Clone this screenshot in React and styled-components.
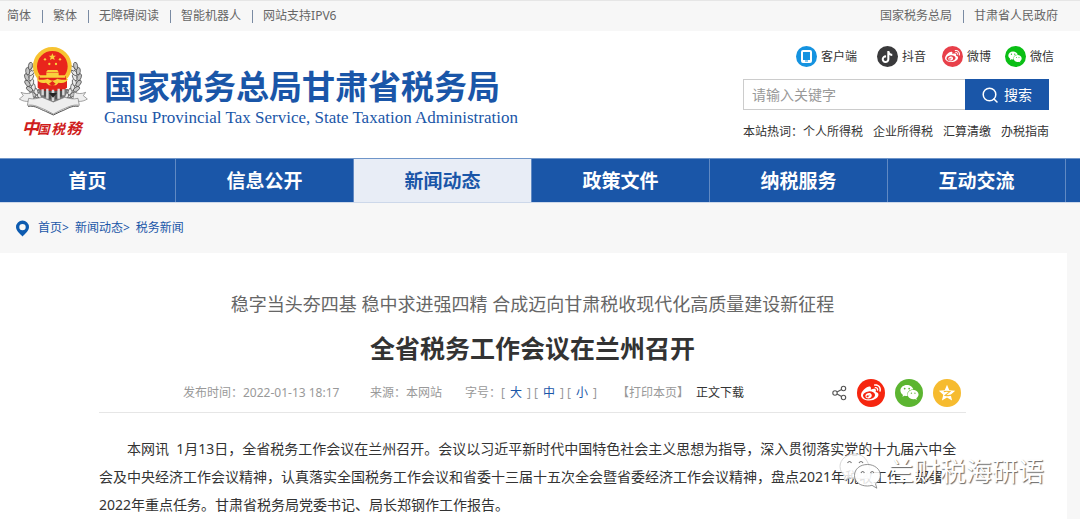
import styled, { createGlobalStyle, css } from 'styled-components'
import { FaTiktok, FaWeibo, FaWeixin } from 'react-icons/fa'

const BLUE = '#1a56a8'
const LIGHT_BLUE = '#e8edf6'
const PAGE_GRAY = '#f7f7f7'
const TEXT = '#333'
const TEXT_GRAY = '#666'
const TEXT_LIGHT = '#999'

const GlobalStyle = createGlobalStyle`
  * {
    box-sizing: border-box;
  }

  body {
    margin: 0;
    background-color: ${PAGE_GRAY};
    color: ${TEXT};
    font-family: 'Noto Sans', 'Noto Sans CJK SC', sans-serif;
    font-size: 12px;
    line-height: 20px;
    overflow-x: hidden;
  }

  a {
    color: inherit;
    text-decoration: none;
  }
`

const TopBar = styled.div`
  height: 31px;
  padding: 0 22px 0 7px;
  display: flex;
  align-items: center;
  justify-content: space-between;
  border-top: 1px solid #e6e6e6;
  color: ${TEXT_GRAY};
`

const TopLinks = styled.nav`
  display: flex;
  align-items: center;
`

const TopLink = styled.a`
  display: flex;
  align-items: center;

  & + &::before {
    content: '';
    width: 1px;
    height: 13px;
    margin: 0 10px 0 11px;
    background-color: #7a8ba3;
  }
`

const Header = styled.header`
  min-height: 127px;
  padding: 15px 26px 16px 18px;
  display: flex;
  justify-content: space-between;
  background-color: #fff;
`

const Brand = styled.a`
  display: flex;
  gap: 16px;
`

const EmblemSvg = styled.svg`
  width: 70px;
  height: 92px;
  flex-shrink: 0;
`

const EmblemText = styled.text`
  font-family: 'Noto Sans CJK SC', sans-serif;
  font-weight: 700;
  font-style: italic;
  fill: #cf1d1d;
`

const BrandText = styled.div`
  padding-top: 20px;
  color: ${BLUE};
  white-space: nowrap;
`

const BrandName = styled.div`
  font-size: 33px;
  font-weight: 700;
  line-height: 42px;
`

const BrandEnglish = styled.div`
  font-family: 'Liberation Serif', serif;
  font-size: 17px;
  line-height: 20px;
`

const Tools = styled.div`
  width: 311px;
  flex-shrink: 0;
`

const Socials = styled.div`
  display: flex;
  justify-content: flex-end;
`

const SocialLink = styled.a`
  height: 21px;
  margin-left: ${({ $gap }) => $gap}px;
  display: flex;
  align-items: center;
  gap: 4px;
`

const Circle = styled.span`
  width: ${({ $size }) => $size}px;
  height: ${({ $size }) => $size}px;
  display: flex;
  align-items: center;
  justify-content: center;
  border-radius: 50%;
  background-color: ${({ $color }) => $color};
  color: #fff;
`

const Search = styled.form`
  height: 31px;
  margin: 12px 5px 12px 0;
  display: flex;
`

const searchText = css`
  font-family: inherit;
  font-size: 14px;
  line-height: 20px;
`

const SearchInput = styled.input`
  ${searchText}
  min-width: 0;
  flex: 1;
  padding: 0 8px;
  border: 1px solid #ccc;
  border-right: 0;
  border-radius: 0;
  outline: none;
  color: ${TEXT};

  &::placeholder {
    color: ${TEXT_LIGHT};
  }
`

const SearchButton = styled.button`
  ${searchText}
  width: 84px;
  padding: 0;
  display: flex;
  align-items: center;
  justify-content: center;
  gap: 6px;
  border: 0;
  background-color: ${BLUE};
  color: #fff;
`

const HotWords = styled.div`
  display: flex;
  white-space: nowrap;

  a {
    margin-right: 10px;
  }
`

const Nav = styled.nav`
  height: 45px;
  display: grid;
  grid-template-columns: 176fr repeat(5, 178fr) 14fr;
  border-top: 1px solid #6f95c9;
  border-bottom: 1px solid #cdd8ea;
  background-color: ${BLUE};
`

const NavLink = styled.a`
  display: flex;
  align-items: center;
  justify-content: center;
  border-right: 1px solid #6089c3;
  background-color: ${({ $active }) => ($active ? LIGHT_BLUE : BLUE)};
  color: ${({ $active }) => ($active ? BLUE : '#fff')};
  font-size: 19px;
  font-weight: 700;
`

const Breadcrumb = styled.nav`
  height: 50px;
  padding: 0 15px;
  display: flex;
  align-items: center;
  color: ${BLUE};

  svg {
    margin-right: 8px;
  }

  a + a {
    margin-left: 6px;
  }
`

const Article = styled.main`
  margin-right: 13px;
  padding: 37px 101px 0 99px;
  position: relative;
  background-color: #fff;
`

const Subtitle = styled.p`
  margin: 0;
  color: ${TEXT_GRAY};
  font-size: 18px;
  line-height: 28px;
  text-align: center;
  white-space: nowrap;
`

const Title = styled.h1`
  margin: 10px 0;
  font-size: 25px;
  font-weight: 700;
  line-height: 40px;
  text-align: center;
`

const Meta = styled.div`
  min-height: 35px;
  padding: 0 5px 5px 84px;
  display: flex;
  align-items: center;
  justify-content: space-between;
  border-bottom: 1px solid #e6e6e6;
  color: ${TEXT_LIGHT};
  white-space: nowrap;
`

const MetaInfo = styled.div`
  display: flex;
`

const MetaItem = styled.span`
  min-width: ${({ $width }) => $width}px;
`

const SizeButton = styled.button`
  margin: 0 5px;
  padding: 0;
  border: 0;
  background: none;
  color: ${BLUE};
  font: inherit;
`

const PlainLink = styled.a`
  color: ${({ $dark }) => ($dark ? TEXT : TEXT_LIGHT)};
`

const Share = styled.div`
  display: flex;
  align-items: center;
  gap: 10px;
`

const Body = styled.p`
  margin: 0;
  padding-top: 22px;
  font-size: 14px;
  line-height: 28px;
  text-indent: 2em;
`

const Watermark = styled.div`
  position: absolute;
  right: 23px;
  top: 197px;
  display: flex;
  align-items: center;
  gap: 6px;
  color: #fff;
  font-size: 26px;
  line-height: 42px;
  text-shadow: 1px 1px 1px rgba(0, 0, 0, 0.6);
  white-space: nowrap;
`

const TOP_LEFT = ['简体', '繁体', '无障碍阅读', '智能机器人', '网站支持IPV6']
const TOP_RIGHT = ['国家税务总局', '甘肃省人民政府']
const HOT_WORDS = ['个人所得税', '企业所得税', '汇算清缴', '办税指南']
const NAV_ITEMS = ['首页', '信息公开', '新闻动态', '政策文件', '纳税服务', '互动交流']
const ACTIVE_NAV = '新闻动态'

const SOCIALS = [
  { label: '客户端', color: '#1593e0', gap: 0, icon: <TabletIcon /> },
  { label: '抖音', color: '#3a3a3c', gap: 20, icon: <FaTiktok size={12} /> },
  { label: '微博', color: '#e8404a', gap: 16, icon: <FaWeibo size={15} /> },
  { label: '微信', color: '#0abf15', gap: 14, icon: <FaWeixin size={14} /> },
]

// one side of the wreath, from the base up to the ring
const WHEAT = [
  [128, 184, 25], [113, 174, 35], [101, 160, 48], [93, 145, 62],
  [88, 129, 78], [87, 112, 94], [90, 96, 110], [98, 82, 125],
]

function TabletIcon() {
  return (
    <svg width="11" height="13" viewBox="0 0 11 13">
      <rect x="1" y="1" width="9" height="11" rx="1" fill="none" stroke="#fff" strokeWidth="2" />
      <path d="M1 10h9v2H1z" fill="#fff" />
      <path d="M4 10.5h3v1H4z" fill="#1593e0" />
    </svg>
  )
}

function SearchIcon() {
  return (
    <svg width="16" height="16" viewBox="0 0 16 16" fill="none" stroke="#fff" strokeWidth="1.5">
      <circle cx="7.5" cy="7.5" r="6.3" />
      <path d="M12 12l3 3" strokeLinecap="round" />
    </svg>
  )
}

function PinIcon() {
  return (
    <svg width="15" height="17" viewBox="0 0 15 17">
      <path
        d="M7.5 .5a6.500 6.500 0 0 0-6.500 6.500c0 3.600 3.500 6.300 6.500 9.500 3-3.200 6.500-5.900 6.500-9.500A6.500 6.500 0 0 0 7.500 .5zm0 3.400a3.200 3.200 0 1 1 0 6.400 3.200 3.200 0 0 1 0-6.400z"
        fill="#0d5bb0"
      />
    </svg>
  )
}

function ShareIcon() {
  return (
    <svg width="15" height="16" viewBox="0 0 15 16" fill="none" stroke="#555" strokeWidth="1.1">
      <circle cx="3" cy="8" r="2.2" />
      <circle cx="11.5" cy="3.5" r="2.2" />
      <circle cx="11.5" cy="12.5" r="2.2" />
      <path d="M5 7l4.6-2.5M5 9l4.6 2.5" />
    </svg>
  )
}

function QzoneIcon() {
  return (
    <svg width="18" height="18" viewBox="0 0 18 18">
      <path
        d="M9 .8l2.300 5.500 5.900.5-4.500 3.900 1.400 5.800L9 13.400l-5.100 3.100 1.400-5.800L.8 6.800l5.900-.5z"
        fill="#fff"
      />
      <path
        d="M5.8 7.600c2-.5 4.100-.4 6 0L7.200 11.300c2 .4 4 .4 6.300-.1"
        fill="none"
        stroke="#f6bb2f"
        strokeWidth="1.2"
      />
    </svg>
  )
}

function WechatOutline() {
  return (
    <svg width="44" height="38" viewBox="0 0 44 38" fill="#fff" fillOpacity=".85" stroke="#777" strokeWidth=".8">
      <path
        d="M17 2C8.500 2 2 7.500 2 14.500c0 4 2 7 5.500 9.500L6 28.500l5.500-2.800c2 .6 3.500.8 5.500.8h15C33 20 31.500 2 17 2z"
        stroke="#ccc"
      />
      <path d="M29.500 12.500C22 12.500 16.500 17 16.500 23.500S22 34 29.500 34c1.500 0 3-.3 4.500-.7l4.800 2.900-1.300-4.500c3-2.200 5-5 5-8.200 0-6.200-6-11-13-11z" />
      <path d="M9.5 11q2-3 4 0M21 11q2-3 4 0M23 21q1.700-3 3.400 0M32.500 21q1.700-3 3.400 0" fill="none" strokeWidth="1.2" />
    </svg>
  )
}

function Wreath() {
  return WHEAT.map(([x, y, angle]) => (
    <g key={y} transform={`translate(${x} ${y}) rotate(${angle})`} stroke="#3b3b3b" strokeWidth="2">
      <ellipse cx="0" cy="-7" rx="11" ry="6" fill="#e9e9e9" transform="rotate(24)" />
      <ellipse cx="0" cy="7" rx="11" ry="6" fill="#c4c4c4" transform="rotate(-24)" />
    </g>
  ))
}

function Emblem() {
  return (
    <EmblemSvg viewBox="54 21 210 276" role="img" aria-label="中国税务">
      <Wreath />
      <g transform="translate(318 0) scale(-1 1)">
        <Wreath />
      </g>
      <path d="M112 150h94l-18 40-29 14-29-14z" fill="#777" />
      <path d="M113 108h88v38l-14 10h-60l-14-10z" fill="#e2231a" />
      <circle cx="157" cy="82" r="52" fill="#e9251c" stroke="#f7c331" strokeWidth="12" />
      <path d="M116 112q41-16 82 0v30q-8 10-18 12h-46q-12-3-18-12z" fill="#e2231a" />
      <path d="M157 43l3 7h8l-6 5 2 8-7-4-7 4 2-8-6-5h8z" fill="#f9d23c" />
      <g fill="#f9d23c">
        <circle cx="135" cy="61" r="3.5" />
        <circle cx="180" cy="61" r="3.5" />
        <circle cx="148" cy="75" r="3.5" />
        <circle cx="168" cy="75" r="3.5" />
        <path d="M143 93h29l4 7h-38zM139 101h37v8h20v7h-77v-7h20z" />
        <path d="M110 119c14 6 24 3 33 0 9 7 20 7 29 0 9 3 20 6 33 0-6 12-17 15-29 12l-8 8h-21l-9-8c-12 3-23 0-28-12z" />
      </g>
      <path d="M157 126l10 8-10 7-10-7z" fill="#e2231a" />
      <path d="M128 151v18M142 149v30M159 152v34M176 149v30M190 151v18" stroke="#d9d9d9" strokeWidth="7" />
      <path d="M135 151v22M150 154v27M168 154v27M183 151v22" stroke="#333" strokeWidth="3" />
      <path d="M147 162h24l-12 14z" fill="#222" />
      <path
        d="M58 180l12-10-7-10c12 5 24 5 34-1l5 24c-16 6-30 6-44-3zM262 180l-12-10 7-10c-12 5-24 5-34-1l-5 24c16 6 30 6 44-3z"
        fill="#eee"
        stroke="#777"
        strokeWidth="2"
      />
      <path
        d="M86 178c14 4 27 0 40-3l34 14 34-14c13 3 26 7 40 3l4 21c-21-4-36 7-53 13l-25 13-25-13c-17-6-32-17-53-13z"
        fill="#eee"
        stroke="#777"
        strokeWidth="2"
      />
      <path d="M84 202c24-3 35 9 53 15l23 11 23-11c18-6 29-18 53-15" fill="none" stroke="#555" strokeWidth="3" />
      <EmblemText x="65" y="286" fontSize="52">中</EmblemText>
      <EmblemText x="112" y="285" fontSize="37">国</EmblemText>
      <EmblemText x="154" y="285" fontSize="41">税</EmblemText>
      <EmblemText x="199" y="286" fontSize="46">務</EmblemText>
    </EmblemSvg>
  )
}

function TopLinkList({ items }) {
  return (
    <TopLinks>
      {items.map((item) => (
        <TopLink key={item} href="#">
          {item}
        </TopLink>
      ))}
    </TopLinks>
  )
}

function SiteHeader() {
  return (
    <Header>
      <Brand href="#">
        <Emblem />
        <BrandText>
          <BrandName>国家税务总局甘肃省税务局</BrandName>
          <BrandEnglish>Gansu Provincial Tax Service, State Taxation Administration</BrandEnglish>
        </BrandText>
      </Brand>
      <Tools>
        <Socials>
          {SOCIALS.map(({ label, color, gap, icon }) => (
            <SocialLink key={label} href="#" $gap={gap}>
              <Circle $size={21} $color={color}>
                {icon}
              </Circle>
              {label}
            </SocialLink>
          ))}
        </Socials>
        <Search onSubmit={(e) => e.preventDefault()}>
          <SearchInput type="text" placeholder="请输入关键字" aria-label="请输入关键字" />
          <SearchButton type="submit">
            <SearchIcon />
            搜索
          </SearchButton>
        </Search>
        <HotWords>
          本站热词：
          {HOT_WORDS.map((word) => (
            <a key={word} href="#">
              {word}
            </a>
          ))}
        </HotWords>
      </Tools>
    </Header>
  )
}

function ArticleMeta() {
  return (
    <Meta>
      <MetaInfo>
        <MetaItem $width={187}>发布时间：2022-01-13 18:17</MetaItem>
        <MetaItem $width={95}>来源：本网站</MetaItem>
        <MetaItem $width={152}>
          字号：[<SizeButton type="button">大</SizeButton>] [
          <SizeButton type="button">中</SizeButton>] [
          <SizeButton type="button">小</SizeButton>]
        </MetaItem>
        <MetaItem $width={79}>
          <PlainLink href="#">【打印本页】</PlainLink>
        </MetaItem>
        <PlainLink href="#" $dark>
          正文下载
        </PlainLink>
      </MetaInfo>
      <Share>
        <ShareIcon />
        <Circle as="a" href="#" aria-label="微博" $size={28} $color="#f6260f">
          <FaWeibo size={20} />
        </Circle>
        <Circle as="a" href="#" aria-label="微信" $size={28} $color="#5cb531">
          <FaWeixin size={19} />
        </Circle>
        <Circle as="a" href="#" aria-label="QQ空间" $size={28} $color="#f6bb2f">
          <QzoneIcon />
        </Circle>
      </Share>
    </Meta>
  )
}

export default function App() {
  return (
    <>
      <GlobalStyle />
      <TopBar>
        <TopLinkList items={TOP_LEFT} />
        <TopLinkList items={TOP_RIGHT} />
      </TopBar>
      <SiteHeader />
      <Nav>
        {NAV_ITEMS.map((item) => (
          <NavLink key={item} href="#" $active={item === ACTIVE_NAV}>
            {item}
          </NavLink>
        ))}
      </Nav>
      <Breadcrumb>
        <PinIcon />
        <a href="#">首页&gt;</a>
        <a href="#">新闻动态&gt;</a>
        <a href="#">税务新闻</a>
      </Breadcrumb>
      <Article>
        <Subtitle>稳字当头夯四基 稳中求进强四精 合成迈向甘肃税收现代化高质量建设新征程</Subtitle>
        <Title>全省税务工作会议在兰州召开</Title>
        <ArticleMeta />
        <Body>
          本网讯&nbsp; 1月13日，全省税务工作会议在兰州召开。会议以习近平新时代中国特色社会主义思想为指导，深入贯彻落实党的十九届六中全会及中央经济工作会议精神，认真落实全国税务工作会议和省委十三届十五次全会暨省委经济工作会议精神，盘点2021年税收工作，部署2022年重点任务。甘肃省税务局党委书记、局长郑钢作工作报告。
        </Body>
        <Watermark>
          <WechatOutline />
          兰财税海研语
        </Watermark>
      </Article>
    </>
  )
}
